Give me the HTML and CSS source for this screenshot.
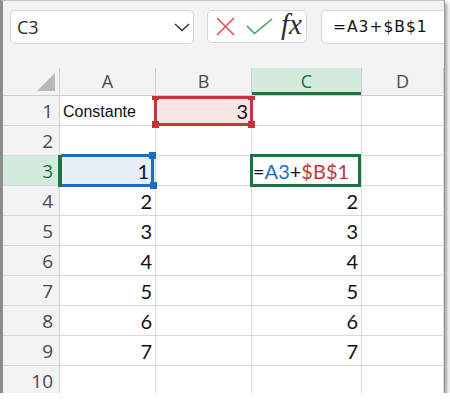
FILE: index.html
```html
<!doctype html>
<html>
<head>
<meta charset=utf-8>
<title>Referencia absoluta</title>
<link rel="stylesheet" href="styles.css">
</head>
<body>

<div class=window>

  <div class=toolbar>
    <div class=namebox>
      <span>C3</span>
      <svg class=chevron width=16 height=9 viewBox="0 0 16 9"><polyline points="1,1 8,7.5 15,1" /></svg>
    </div>
    <div class=fxbox>
      <svg class=cancel width=19 height=19 viewBox="0 0 19 19"><path d="M1 1 L18 18 M18 1 L1 18" /></svg>
      <svg class=enter width=27 height=17 viewBox="0 0 27 17"><polyline points="1,8 8.5,15.5 26,1" /></svg>
      <span class=fx>fx</span>
    </div>
    <div class=formula>=A3+$B$1</div>
  </div>

  <div class=sheet>
    <div class="corner"><i class=selall></i></div>
    <div class="colhead">A</div>
    <div class="colhead">B</div>
    <div class="colhead sel">C</div>
    <div class="colhead">D</div>

    <div class=rowhead>1</div>
    <div class="cell text">Constante</div>
    <div class="cell ref red">3<i class=box></i><i class="h tl"></i><i class="h tr"></i><i class="h bl"></i><i class="h br"></i></div>
    <div class=cell></div>
    <div class=cell></div>

    <div class=rowhead>2</div>
    <div class=cell></div>
    <div class=cell></div>
    <div class=cell></div>
    <div class=cell></div>

    <div class="rowhead sel">3</div>
    <div class="cell ref blue">1<i class=box></i><i class="h tr"></i><i class="h br"></i></div>
    <div class=cell></div>
    <div class="cell active"><span>=<b class=blue-t>A3</b>+<b class=red-t>$B$1</b></span></div>
    <div class=cell></div>

    <div class=rowhead>4</div>
    <div class=cell>2</div>
    <div class=cell></div>
    <div class=cell>2</div>
    <div class=cell></div>

    <div class=rowhead>5</div>
    <div class=cell>3</div>
    <div class=cell></div>
    <div class=cell>3</div>
    <div class=cell></div>

    <div class=rowhead>6</div>
    <div class=cell>4</div>
    <div class=cell></div>
    <div class=cell>4</div>
    <div class=cell></div>

    <div class=rowhead>7</div>
    <div class=cell>5</div>
    <div class=cell></div>
    <div class=cell>5</div>
    <div class=cell></div>

    <div class=rowhead>8</div>
    <div class=cell>6</div>
    <div class=cell></div>
    <div class=cell>6</div>
    <div class=cell></div>

    <div class=rowhead>9</div>
    <div class=cell>7</div>
    <div class=cell></div>
    <div class=cell>7</div>
    <div class=cell></div>

    <div class=rowhead>10</div>
    <div class=cell></div>
    <div class=cell></div>
    <div class=cell></div>
    <div class=cell></div>
  </div>

</div>

</body>
</html>
```

FILE: styles.css
```css
body {
  margin: 0;
  background: #fff;
}

.window {
  width: 444px;
  height: 393px;
  box-sizing: border-box;
  border-left: 3px solid #8c8c8c;
  border-top: 1px solid #c4c4c4;
  background: #f3f3f3;
  overflow: hidden;
  box-shadow: 1px 0 0 #9a9a9a, 3px 3px 4px rgba(0, 0, 0, 0.4);
}

/* formula bar */
.toolbar {
  height: 67px;
  display: flex;
  align-items: flex-start;
  padding: 9px 0 0 7px;
  box-sizing: border-box;
  font-family: "Open Sans", "Noto Sans", sans-serif;
}

.namebox,
.fxbox,
.formula {
  background: #fff;
  border: 1px solid #d6d6d6;
  border-radius: 5px;
  box-sizing: border-box;
  height: 34px;
}

.namebox {
  width: 184px;
  display: flex;
  align-items: center;
  justify-content: space-between;
  padding: 0 3px 0 6px;
  font-size: 18px;
  color: #2b2b2b;
}
.chevron polyline {
  fill: none;
  stroke: #333;
  stroke-width: 1.4;
}

.fxbox {
  margin-left: 13px;
  width: 100px;
  height: 33px;
  display: flex;
  align-items: center;
  padding-left: 8px;
}
.cancel path {
  stroke: #e8474b;
  stroke-width: 1.5;
}
.enter {
  margin-left: 11px;
}
.enter polyline {
  fill: none;
  stroke: #3aa35b;
  stroke-width: 1.6;
}
.fx {
  margin-left: 8px;
  font-family: "Liberation Serif", "DejaVu Serif", serif;
  font-style: italic;
  font-size: 29px;
  line-height: 1;
  color: #2d2d2d;
  margin-top: -4px;
}

.formula {
  margin-left: 14px;
  flex: 1;
  margin-right: -6px;
  padding: 0 11px;
  font-family: "DejaVu Sans", sans-serif;
  font-size: 15.5px;
  letter-spacing: 1px;
  line-height: 32px;
  color: #111;
}

/* grid */
.sheet {
  display: grid;
  grid-template-columns: 57px 96px 96px 110px 1fr;
  grid-template-rows: 28px;
  grid-auto-rows: 30px;
  background: #fff;
}

.corner,
.colhead,
.rowhead {
  background: #f3f3f3;
  border-right: 1px solid #cfcfcf;
  border-bottom: 1px solid #cfcfcf;
  box-sizing: border-box;
  font-family: "Open Sans", "Noto Sans", sans-serif;
  font-size: 18px;
  color: #4a4a4a;
}

.corner {
  position: relative;
}
.selall {
  position: absolute;
  right: 4px;
  bottom: 4px;
  width: 0;
  height: 0;
  border-left: 18px solid transparent;
  border-bottom: 18px solid #b9b9b9;
}

.colhead {
  text-align: center;
  line-height: 27px;
}
.colhead.sel {
  background: #d2ebdc;
  color: #1c6b40;
  box-shadow: inset 0 -3px #1f7244;
}

.rowhead {
  text-align: right;
  padding: 2px 6px 0 0;
  line-height: 27px;
  font-size: 19px;
  border-bottom-color: #d9d9d9;
}
.rowhead.sel {
  position: relative;
  background: #d2ebdc;
  color: #1c6b40;
}
.rowhead.sel::after {
  content: "";
  position: absolute;
  top: -1px;
  bottom: -2px;
  right: -3px;
  width: 4px;
  background: #1f7244;
  z-index: 3;
}

.cell {
  border-right: 1px solid #dadada;
  border-bottom: 1px solid #dadada;
  box-sizing: border-box;
  text-align: right;
  padding: 2px 3px 0 0;
  line-height: 27px;
  font-family: Lato, "Open Sans", sans-serif;
  font-size: 20px;
  color: #111;
}
.cell.text {
  text-align: left;
  padding-left: 3px;
  font-family: "Liberation Sans", Arial, sans-serif;
  font-size: 16px;
}

/* range references */
.ref {
  position: relative;
}
.ref .box {
  position: absolute;
  border: 3px solid;
  z-index: 2;
}
.ref .h {
  position: absolute;
  width: 7px;
  height: 7px;
  z-index: 2;
}
.ref.red {
  background: #f8e5e5;
}
.ref.red .box {
  border-color: #c1373b;
  top: 0;
  left: -2px;
  right: -2px;
  bottom: -1px;
}
.ref.red .h { background: #c1373b; }
.ref.red .tl { left: -4px; top: 0; height: 4px; }
.ref.red .tr { right: -4px; top: 0; height: 4px; }
.ref.red .bl { left: -4px; bottom: -3px; }
.ref.red .br { right: -4px; bottom: -3px; }

.ref.blue {
  background: #e6eef8;
  padding-right: 6px;
}
.ref.blue .box {
  border-color: #1c6dc1;
  border-left: 0;
  top: -2px;
  left: 1px;
  right: 1px;
  bottom: -2px;
}
.ref.blue .h { background: #1c6dc1; }
.ref.blue .tr { right: -1px; top: -4px; }
.ref.blue .br { right: -2px; bottom: -4px; }

.cell.active {
  position: relative;
  text-align: left;
  padding-left: 1px;
}
.cell.active::after {
  content: "";
  position: absolute;
  top: -2px;
  left: -2px;
  right: 0;
  bottom: -2px;
  border: 3px solid #1f7244;
  z-index: 2;
}
.cell.active b {
  font-weight: normal;
}
.blue-t { color: #1d6fc4; }
.red-t { color: #c0383c; }
```
